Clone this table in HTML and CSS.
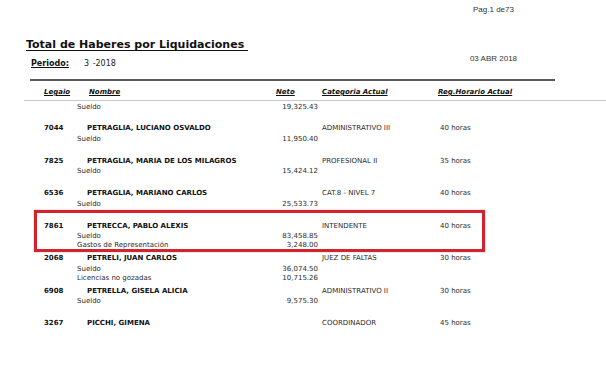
FILE: index.html
```html
<!DOCTYPE html>
<html lang="es">
<head>
<meta charset="utf-8">
<title>Total de Haberes por Liquidaciones</title>
<link rel="stylesheet" href="styles.css">
</head>
<body>
<div class="report">
  <div class="pag">Pag.1 de73</div>
  <h1 class="title">Total de Haberes por Liquidaciones&nbsp;</h1>
  <div class="meta">
    <div class="periodo"><span class="periodo-label">Periodo:</span><span class="periodo-val">3 -2018</span></div>
    <div class="fecha">03 ABR 2018</div>
  </div>
  <div class="rule-thick"></div>
  <div class="cols">
    <span>Legaio</span>
    <span>Nombre</span>
    <span>Neto</span>
    <span>Categoria Actual</span>
    <span>Reg.Horario Actual</span>
  </div>
  <div class="rule-thin"></div>

  <div class="line first"><span>Sueldo</span><span>19,325.43</span></div>

  <div class="records">
    <div class="rec">
      <div class="rec-head"><span class="leg">7044</span><span class="name">PETRAGLIA, LUCIANO OSVALDO</span><span>ADMINISTRATIVO III</span><span>40 horas</span></div>
      <div class="details">
        <div class="line"><span>Sueldo</span><span>11,950.40</span></div>
      </div>
    </div>
    <div class="rec">
      <div class="rec-head"><span class="leg">7825</span><span class="name">PETRAGLIA, MARIA DE LOS MILAGROS</span><span>PROFESIONAL II</span><span>35 horas</span></div>
      <div class="details">
        <div class="line"><span>Sueldo</span><span>15,424.12</span></div>
      </div>
    </div>
    <div class="rec">
      <div class="rec-head"><span class="leg">6536</span><span class="name">PETRAGLIA, MARIANO CARLOS</span><span>CAT.8 - NIVEL 7</span><span>40 horas</span></div>
      <div class="details">
        <div class="line"><span>Sueldo</span><span>25,533.73</span></div>
      </div>
    </div>
    <div class="rec marked">
      <div class="rec-head"><span class="leg">7861</span><span class="name">PETRECCA, PABLO ALEXIS</span><span>INTENDENTE</span><span>40 horas</span></div>
      <div class="details">
        <div class="line"><span>Sueldo</span><span>83,458.85</span></div>
        <div class="line"><span>Gastos de Representación</span><span>3,248.00</span></div>
      </div>
      <div class="highlight"></div>
    </div>
    <div class="rec">
      <div class="rec-head"><span class="leg">2068</span><span class="name">PETRELI, JUAN CARLOS</span><span>JUEZ DE FALTAS</span><span>30 horas</span></div>
      <div class="details">
        <div class="line"><span>Sueldo</span><span>36,074.50</span></div>
        <div class="line"><span>Licencias no gozadas</span><span>10,715.26</span></div>
      </div>
    </div>
    <div class="rec">
      <div class="rec-head"><span class="leg">6908</span><span class="name">PETRELLA, GISELA ALICIA</span><span>ADMINISTRATIVO II</span><span>30 horas</span></div>
      <div class="details">
        <div class="line"><span>Sueldo</span><span>9,575.30</span></div>
      </div>
    </div>
    <div class="rec">
      <div class="rec-head"><span class="leg">3267</span><span class="name">PICCHI, GIMENA</span><span>COORDINADOR</span><span>45 horas</span></div>
    </div>
  </div>
</div>
</body>
</html>
```

FILE: styles.css
```css
* { box-sizing: border-box; }
html, body { margin: 0; padding: 0; background: #fff; }
body {
  font-family: "DejaVu Sans", Verdana, sans-serif;
  color: #222;
  width: 606px;
  height: 391px;
  overflow: hidden;
}
.report { width: 606px; }

.pag {
  font-family: "Liberation Sans", Arial, sans-serif;
  font-size: 8px;
  line-height: 10px;
  height: 10px;
  margin: 5px 0 0 432px;
  width: 123px;
  text-align: center;
  color: #333;
}
.title {
  margin: 23px 0 0 26px;
  font-size: 11px;
  line-height: 14px;
  height: 14px;
  font-weight: bold;
  color: #111;
  text-decoration: underline;
  text-decoration-thickness: 1px;
  text-underline-offset: 2px;
}
.meta {
  display: flex;
  align-items: flex-start;
  height: 17px;
}
.periodo {
  width: 432px;
  padding: 7px 0 0 31px;
  font-size: 8px;
  line-height: 10px;
  display: flex;
}
.periodo-label {
  font-weight: bold;
  color: #111;
  text-decoration: underline;
  width: 53px;
}
.periodo-val { white-space: pre; word-spacing: 1px; }
.fecha {
  width: 123px;
  margin-top: 2px;
  text-align: center;
  font-family: "Liberation Sans", Arial, sans-serif;
  font-size: 8px;
  line-height: 10px;
  color: #333;
}
.rule-thick {
  margin: 10px 0 0 30px;
  width: 525px;
  height: 2px;
  background: #5a5a5a;
}
.cols {
  margin-top: 6px;
  display: grid;
  grid-template-columns: 45px 187px 46px 116px auto;
  padding-left: 44px;
  font-size: 7px;
  line-height: 10px;
  height: 10px;
  font-weight: bold;
  font-style: italic;
  color: #111;
}
.cols span { text-decoration: underline; }
.rule-thin {
  margin: 3px 0 0 24px;
  height: 1px;
  background: #c8c8c8;
}

.line {
  display: grid;
  grid-template-columns: 1fr auto;
  margin-left: 77px;
  width: 241px;
  font-size: 7px;
  line-height: 9px;
  height: 9px;
  color: #2a2a2a;
}
.line.first { margin-top: 2px; }

.records { margin-top: 11px; }
.rec {
  position: relative;
  height: 32.5px;
}
.rec-head {
  display: grid;
  grid-template-columns: 43px 235px 118px auto;
  padding-left: 44px;
  font-size: 7px;
  line-height: 10px;
  height: 10px;
  color: #2a2a2a;
}
.rec-head .leg, .rec-head .name {
  font-weight: bold;
  color: #111;
}
.details { padding-top: 1.5px; }

.highlight {
  position: absolute;
  left: 34px;
  top: -10.5px;
  width: 451px;
  height: 42px;
  border: 3px solid #d3232c;
  box-shadow: 0 0 1px rgba(211, 35, 44, 0.6);
}
```
